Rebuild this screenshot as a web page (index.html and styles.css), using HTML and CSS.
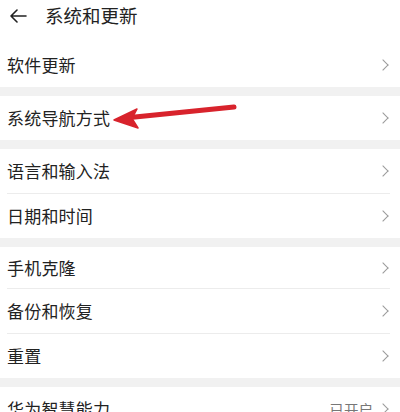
FILE: index.html
```html
<!DOCTYPE html>
<html lang="zh">
<head>
<meta charset="utf-8">
<link rel="stylesheet" href="styles.css">
</head>
<body>
<div class="page">
  <header class="header">
    <svg class="back" width="18" height="14" viewBox="0 0 18 14"><path d="M17 7H2M8 1L2 7l6 6" fill="none" stroke="#222" stroke-width="1.6" stroke-linecap="round" stroke-linejoin="round"/></svg>
    <span class="title">系统和更新</span>
  </header>
  <section class="card">
    <div class="row"><span class="label">软件更新</span><span class="chev"></span></div>
  </section>
  <section class="card">
    <div class="row"><span class="label">系统导航方式</span><span class="chev"></span></div>
  </section>
  <section class="card">
    <div class="row sep"><span class="label">语言和输入法</span><span class="chev"></span></div>
    <div class="row"><span class="label">日期和时间</span><span class="chev"></span></div>
  </section>
  <section class="card">
    <div class="row sep short"><span class="label">手机克隆</span><span class="chev"></span></div>
    <div class="row sep"><span class="label">备份和恢复</span><span class="chev"></span></div>
    <div class="row"><span class="label">重置</span><span class="chev"></span></div>
  </section>
  <section class="card">
    <div class="row"><span class="label">华为智慧能力</span><span class="value">已开启</span><span class="chev"></span></div>
  </section>
  <svg class="pointer" width="400" height="412" viewBox="0 0 400 412">
    <line x1="130" y1="117.5" x2="234" y2="107" stroke="#d8232c" stroke-width="5" stroke-linecap="round"/>
    <path d="M114 120 L137 109 L132 118.5 L138 128 Z" fill="#d8232c" stroke="#d8232c" stroke-width="1.5" stroke-linejoin="round"/>
  </svg>
</div>
</body>
</html>
```
FILE: styles.css
```css
html, body {
  margin: 0;
  padding: 0;
  background: #f1f1f1;
}
.page {
  position: relative;
  width: 400px;
  height: 412px;
  overflow: hidden;
  font-family: "Noto Sans CJK SC", "Noto Sans", sans-serif;
  color: #222;
  display: flex;
  flex-direction: column;
  gap: 9px;
}
.header {
  height: 43px;
  flex-shrink: 0;
  background: #fff;
  display: flex;
  align-items: flex-start;
  padding: 3px 0 0 9px;
  box-sizing: border-box;
  margin-bottom: -9px;
}
.back {
  margin-top: 6px;
}
.title {
  margin-left: 18px;
  font-size: 18.5px;
  line-height: 24px;
}
.card {
  background: #fff;
  padding: 0 10px 0 7px;
  flex-shrink: 0;
}
.row {
  height: 44px;
  display: flex;
  align-items: center;
  box-sizing: border-box;
}
.row.sep {
  border-bottom: 1px solid #ececec;
  height: 45px;
}
.row.short {
  height: 42px;
}
.label {
  flex: 1;
  font-size: 17px;
  line-height: 22px;
  letter-spacing: 0.2px;
}
.value {
  font-size: 14.5px;
  color: #777;
  margin-right: 6px;
}
.chev {
  width: 7px;
  height: 7px;
  border-top: 1.5px solid #9a9a9a;
  border-right: 1.5px solid #9a9a9a;
  transform: rotate(45deg);
  margin-right: 3px;
}
.pointer {
  position: absolute;
  left: 0;
  top: 0;
  pointer-events: none;
}
```
